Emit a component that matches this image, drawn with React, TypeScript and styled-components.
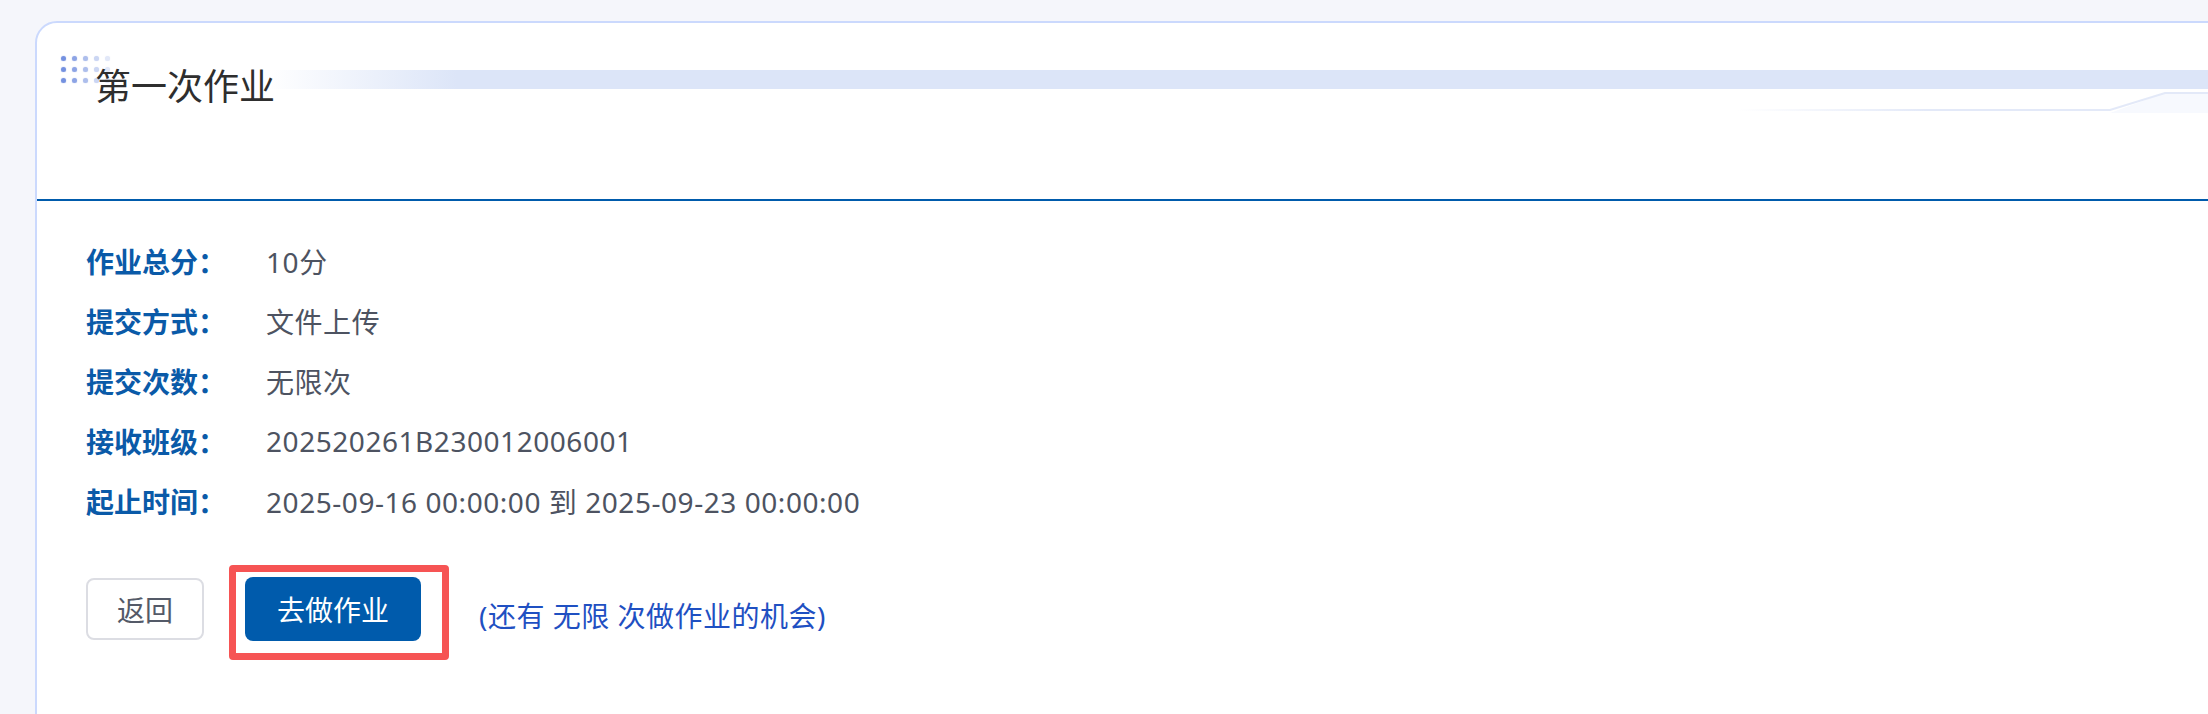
import React from "react";
import styled, { createGlobalStyle } from "styled-components";

const GlobalStyle = createGlobalStyle`
  html, body {
    margin: 0;
    padding: 0;
    background: #f5f6fb;
    font-family: "Noto Sans", "Noto Sans CJK SC", sans-serif;
  }
`;

const Page = styled.div`
  height: 714px;
  overflow: hidden;
  padding: 21px 0 0 35px;
  box-sizing: border-box;
`;

const Card = styled.div`
  margin-right: -60px;
  min-height: 760px;
  background: #ffffff;
  border: 2px solid #cbd9fd;
  border-radius: 22px 0 0 0;
`;

const Header = styled.div`
  position: relative;
  height: 178px;
  box-sizing: border-box;
  padding: 46px 0 0 58px;
  border-bottom: 2px solid #005bac;
  overflow: hidden;
`;

const Band = styled.div`
  position: absolute;
  left: 230px;
  right: 0;
  top: 47px;
  height: 19px;
  background: linear-gradient(90deg, rgba(220, 229, 248, 0) 0, #dce5f8 190px);
`;

const Deco = styled.svg`
  position: absolute;
  left: 0;
  top: 0;
  pointer-events: none;
`;

const Dots = styled.div`
  position: absolute;
  left: 24px;
  top: 33px;
  display: grid;
  grid-template-columns: repeat(5, 5px);
  grid-auto-rows: 5px;
  gap: 6px;
`;

const Dot = styled.span<{ $a: number }>`
  width: 5px;
  height: 5px;
  border-radius: 50%;
  background: rgba(92, 126, 218, ${(p) => p.$a});
  box-shadow: 0 0 1px rgba(92, 126, 218, ${(p) => p.$a});
`;

const Title = styled.h1`
  position: relative;
  margin: 0;
  font-size: 36px;
  line-height: 36px;
  font-weight: 400;
  color: #2e2e2e;
`;

const Body = styled.div`
  padding: 30px 0 0 49px;
`;

const InfoList = styled.dl`
  margin: 0;
  display: grid;
  grid-template-columns: 180px auto;
  grid-auto-rows: 60px;
  align-items: center;
`;

const Label = styled.dt`
  font-size: 28px;
  font-weight: 700;
  color: #0a5aa8;
`;

const Value = styled.dd`
  margin: 0;
  font-size: 28px;
  letter-spacing: 0.55px;
  color: #4d5361;
`;

const Actions = styled.div`
  display: flex;
  align-items: center;
  margin-top: 34px;
`;

const BackButton = styled.button`
  width: 118px;
  height: 62px;
  margin: 0 25px 7px 0;
  border: 2px solid #dcdde3;
  border-radius: 8px;
  background: #ffffff;
  font-family: inherit;
  font-size: 28px;
  color: #545a68;
`;

const Highlight = styled.div`
  padding: 5px 21px 12px 9px;
  border: 7px solid #f65454;
  border-radius: 4px;
`;

const PrimaryButton = styled.button`
  display: block;
  width: 176px;
  height: 64px;
  border: none;
  border-radius: 8px;
  background: #005bac;
  font-family: inherit;
  font-size: 28px;
  color: #ffffff;
`;

const Hint = styled.span`
  margin: 4px 0 0 30px;
  font-size: 28px;
  letter-spacing: 0.5px;
  color: #1f50c2;
`;

const rows: [string, string][] = [
  ["作业总分：", "10分"],
  ["提交方式：", "文件上传"],
  ["提交次数：", "无限次"],
  ["接收班级：", "202520261B230012006001"],
  ["起止时间：", "2025-09-16 00:00:00 到 2025-09-23 00:00:00"],
];

const alphas = [0.85, 0.7, 0.5, 0.32, 0.18];

export default function App() {
  return (
    <>
      <GlobalStyle />
      <Page>
        <Card>
          <Header>
            <Band />
            <Deco width="2240" height="178" viewBox="0 0 2240 178">
              <defs>
                <linearGradient id="lineFade" x1="0" x2="1" y1="0" y2="0">
                  <stop offset="0" stopColor="#e3e9f8" stopOpacity="0" />
                  <stop offset="0.35" stopColor="#e3e9f8" stopOpacity="1" />
                </linearGradient>
              </defs>
              <path d="M2128 70 L2240 70 L2240 90 L2073 90 Z" fill="#f7f9fe" />
              <path
                d="M1700 87 L2073 87 L2128 70 L2240 70"
                fill="none"
                stroke="url(#lineFade)"
                strokeWidth="2"
              />
            </Deco>
            <Dots>
              {Array.from({ length: 15 }).map((_, i) => (
                <Dot key={i} $a={alphas[i % 5]} />
              ))}
            </Dots>
            <Title>第一次作业</Title>
          </Header>
          <Body>
            <InfoList>
              {rows.map(([k, v]) => (
                <React.Fragment key={k}>
                  <Label>{k}</Label>
                  <Value>{v}</Value>
                </React.Fragment>
              ))}
            </InfoList>
            <Actions>
              <BackButton>返回</BackButton>
              <Highlight>
                <PrimaryButton>去做作业</PrimaryButton>
              </Highlight>
              <Hint>(还有 无限 次做作业的机会)</Hint>
            </Actions>
          </Body>
        </Card>
      </Page>
    </>
  );
}
